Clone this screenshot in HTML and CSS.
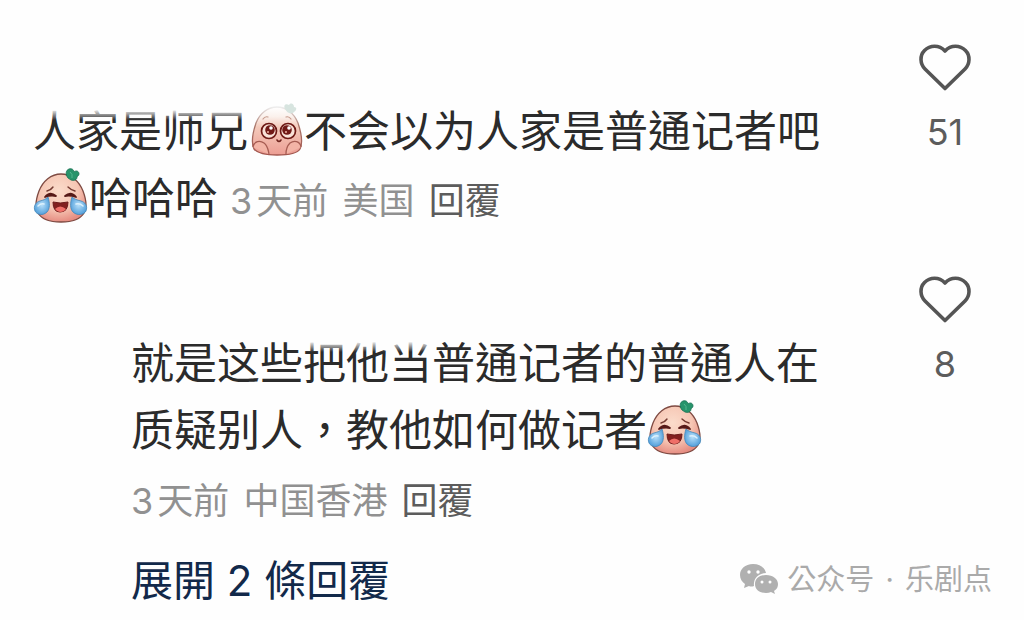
FILE: index.html
```
<!DOCTYPE html>
<html lang="zh-Hant">
<head>
    <meta charset="UTF-8">
    <meta name="viewport" content="width=device-width, initial-scale=1.0">
    <title>留言</title>
    <link rel="stylesheet" href="styles.css">
</head>
<body>
    <!-- Shared icons -->
    <svg class="sprite" aria-hidden="true">
        <defs>
            <radialGradient id="skin" cx="45%" cy="35%" r="65%">
                <stop offset="0" stop-color="#fbdccb"/>
                <stop offset="0.6" stop-color="#f6c6b4"/>
                <stop offset="1" stop-color="#e68d82"/>
            </radialGradient>
            <linearGradient id="skin-pale" x1="0" y1="0" x2="0" y2="1">
                <stop offset="0" stop-color="#ffffff"/>
                <stop offset="0.2" stop-color="#fbf1ec"/>
                <stop offset="0.42" stop-color="#f4cabb"/>
                <stop offset="1" stop-color="#ec9d93"/>
            </linearGradient>
            <linearGradient id="outline-pale" x1="0" y1="0" x2="0" y2="1">
                <stop offset="0" stop-color="#eeeeee"/>
                <stop offset="0.4" stop-color="#a77468"/>
                <stop offset="1" stop-color="#a3564e"/>
            </linearGradient>
            <radialGradient id="tear" cx="50%" cy="45%" r="60%">
                <stop offset="0" stop-color="#b9e0fa"/>
                <stop offset="1" stop-color="#4a9ad8"/>
            </radialGradient>
        </defs>
        <symbol id="heart" viewBox="0 0 54 50">
            <path d="M27 46.500 7 27C2 22 1.500 13.500 6.500 8.500C12 3 21 2.500 27 9C33 2.500 42 3 47.500 8.500C52.500 13.500 52 22 47 27Z" fill="none" stroke="#555" stroke-width="3.600" stroke-linejoin="round"/>
        </symbol>
        <symbol id="laugh" viewBox="0 0 56 56">
            <path d="M28 6C38 6 46 13 50 23C53 31 54 40 51 45C47 52 38 54 28 54C18 54 9 52 5 45C2 40 3 31 6 23C10 13 18 6 28 6Z" fill="url(#skin)" stroke="#7e4a42" stroke-width="1.300"/>
            <path d="M35 10C32 6 33 2 36 1C39 0 41 2 41 4C43 2 46 3 46 6C46 8 44 8 44 9C44 12 41 13 38 12Z" fill="#27946b" stroke="#187052" stroke-width="0.800"/>
            <path d="M37 4Q40 6 39 10" fill="none" stroke="#55b78f" stroke-width="1"/>
            <path d="M14 23Q18 22 20 19M35 19Q38 22 42 23" fill="none" stroke="#743a31" stroke-width="1.400" stroke-linecap="round"/>
            <path d="M12 29Q17 23 23 28Q17 27 12 29ZM32 28Q38 23 43 29Q37 27 32 28Z" fill="#571a18" stroke="#571a18" stroke-width="1.800" stroke-linejoin="round"/>
            <path d="M20 34Q27 36 35 34Q35 44 27 44Q20 44 20 34Z" fill="#82201f" stroke="#6b1a19" stroke-width="1"/>
            <path d="M22 41Q27 36 33 41Q31 44 27 44Q24 44 22 41Z" fill="#ef6f68"/>
            <path d="M15 29C17 35 17 41 14 44C10 48 4 47 2 43C0 38 3 34 7 33C11 32 13 31 15 29Z" fill="url(#tear)" stroke="#4388ba" stroke-width="0.800"/>
            <path d="M39 29C37 35 37 41 40 44C44 48 51 47 53 43C55 38 52 34 48 33C44 32 41 31 39 29Z" fill="url(#tear)" stroke="#4388ba" stroke-width="0.800"/>
            <path d="M5 38Q8 35 11 36M43 36Q47 35 50 38" fill="none" stroke="#dcf1fd" stroke-width="1.500" stroke-linecap="round"/>
        </symbol>
        <symbol id="plead" viewBox="0 0 56 56">
            <path d="M29 6C38 6 46 12 50 22C53 31 55 42 52 48C49 53 39 54 29 54C19 54 10 53 6 48C3 42 5 31 8 22C12 12 20 6 29 6Z" fill="url(#skin-pale)" stroke="url(#outline-pale)" stroke-width="1.300"/>
            <path d="M37 8C35 4 38 2 41 4C43 1 46 3 46 6C49 6 49 9 46 11C43 14 39 12 37 8Z" fill="#d7e4df"/>
            <path d="M15 18Q17 15 20 16M38 16Q41 15 43 18" fill="none" stroke="#c69a8c" stroke-width="1.200" stroke-linecap="round"/>
            <circle cx="21" cy="30" r="7.500" fill="#f9e2d8" stroke="#6d1915" stroke-width="1.700"/>
            <circle cx="40" cy="30" r="7.500" fill="#f9e2d8" stroke="#6d1915" stroke-width="1.700"/>
            <circle cx="22" cy="29" r="4.800" fill="#701a17"/>
            <circle cx="39" cy="29" r="4.800" fill="#701a17"/>
            <circle cx="23" cy="27" r="1.800" fill="#fff"/>
            <circle cx="41" cy="27" r="1.800" fill="#fff"/>
            <circle cx="20" cy="31" r="1" fill="#efb3a4"/>
            <circle cx="38" cy="31" r="1" fill="#efb3a4"/>
            <path d="M29 39Q31 42 33 39" fill="none" stroke="#70251f" stroke-width="1.600" stroke-linecap="round"/>
            <path d="M5 46C6 40 12 39 16 42C20 45 20 49 21 53M53 46C52 40 46 39 42 42C39 45 38 49 38 53" fill="#f3b4a6" stroke="#a65c52" stroke-width="1.300"/>
        </symbol>
    </svg>

    <main class="comments">
        <article class="comment">
            <div class="content">
                <div class="username"></div>
                <p class="text">人家是师兄<svg class="emoji" role="img" aria-label="委屈"><use href="#plead"/></svg>不会以为人家是普通记者吧<svg class="emoji" role="img" aria-label="笑哭"><use href="#laugh"/></svg>哈哈哈 <span class="meta"><span class="num">3</span>天前 <span class="place">美国</span> <a href="#" class="reply-link">回覆</a></span></p>
            </div>
            <div class="likes">
                <button type="button" class="like" aria-label="讚"><svg><use href="#heart"/></svg></button>
                <span>51</span>
            </div>
        </article>

        <article class="comment reply">
            <div class="content">
                <div class="username"></div>
                <p class="text">就是这些把他当普通记者的普通人在质疑别人，教他如何做记者<svg class="emoji" role="img" aria-label="笑哭"><use href="#laugh"/></svg></p>
                <p class="meta"><span class="num">3</span>天前 <span class="place">中国香港</span> <a href="#" class="reply-link">回覆</a></p>
                <button type="button" class="expand">展開 2 條回覆</button>
            </div>
            <div class="likes">
                <button type="button" class="like" aria-label="讚"><svg><use href="#heart"/></svg></button>
                <span>8</span>
            </div>
        </article>
    </main>

    <!-- Account mark over the bottom right corner -->
    <div class="watermark">
        <svg viewBox="0 0 40 34" aria-hidden="true">
            <path d="M14 1C6 1 1 6 1 12C1 16 3 19 6 21L5 25L10 23Q12 24 15 23C14 15 20 10 27 10C26 5 21 1 14 1Z" fill="#b0b0b0"/>
            <path d="M27 12C20 12 16 16 16 21C16 27 21 30 27 30Q30 30 32 29L36 31L35 28C38 26 39 24 39 21C39 16 34 12 27 12Z" fill="#b0b0b0"/>
            <g fill="#fff"><circle cx="10" cy="9" r="1.700"/><circle cx="19" cy="9" r="1.700"/><circle cx="23" cy="19" r="1.500"/><circle cx="31" cy="19" r="1.500"/></g>
        </svg>
        <span>公众号<span class="dot"> · </span>乐剧点</span>
    </div>
</body>
</html>
```
FILE: styles.css
```
body {
    font-family: Inter, "Noto Sans CJK TC", sans-serif;
    margin: 0;
    background-color: #fefefe;
    color: #2b2b2b;
}
p {
    margin: 0;
}
button {
    font-family: inherit;
    background: none;
    border: none;
    padding: 0;
    cursor: pointer;
}
.sprite {
    position: absolute;
    width: 0;
    height: 0;
}
.comment {
    display: grid;
    grid-template-columns: 1fr 158px;
    column-gap: 20px;
    padding-left: 33px;
}
.reply {
    padding-left: 131px;
}
.username {
    position: relative;
    height: 98px;
}
.reply .username {
    height: 95px;
}
/* white fade that runs over the top of the first line */
.username::after {
    content: "";
    position: absolute;
    left: 0;
    top: 100%;
    width: 215px;
    height: 22px;
    background: linear-gradient(#fefefe 50%, rgba(254, 254, 254, 0));
}
.reply .username::after {
    left: 172px;
    width: 130px;
}
.text {
    font-size: 43px;
    line-height: 67px;
}
.emoji {
    width: 56px;
    height: 56px;
    vertical-align: -10px;
}
.meta {
    font-size: 36px;
    line-height: 67px;
    color: #919191;
}
.reply .meta {
    margin-top: 4px;
}
.num {
    margin-right: 4px;
}
.place {
    margin: 0 4px;
}
.reply-link {
    color: #5c5c5c;
    text-decoration: none;
}
.expand {
    display: block;
    margin-top: 12px;
    font-size: 42px;
    line-height: 67px;
    color: #12294a;
}
.likes {
    display: flex;
    flex-direction: column;
    align-items: center;
    padding-top: 42px;
    font-size: 36px;
    line-height: 44px;
    color: #5c5c5c;
}
.reply .likes {
    padding-top: 39px;
}
.like svg {
    display: block;
    width: 54px;
    height: 50px;
}
.like {
    margin-bottom: 18px;
}
.watermark {
    position: absolute;
    right: 32px;
    bottom: 18px;
    display: flex;
    align-items: center;
    gap: 8px;
    font-size: 29px;
    line-height: 44px;
    color: #aaa;
}
.watermark svg {
    width: 40px;
    height: 34px;
}
.dot {
    margin: 0 3px;
}
```
